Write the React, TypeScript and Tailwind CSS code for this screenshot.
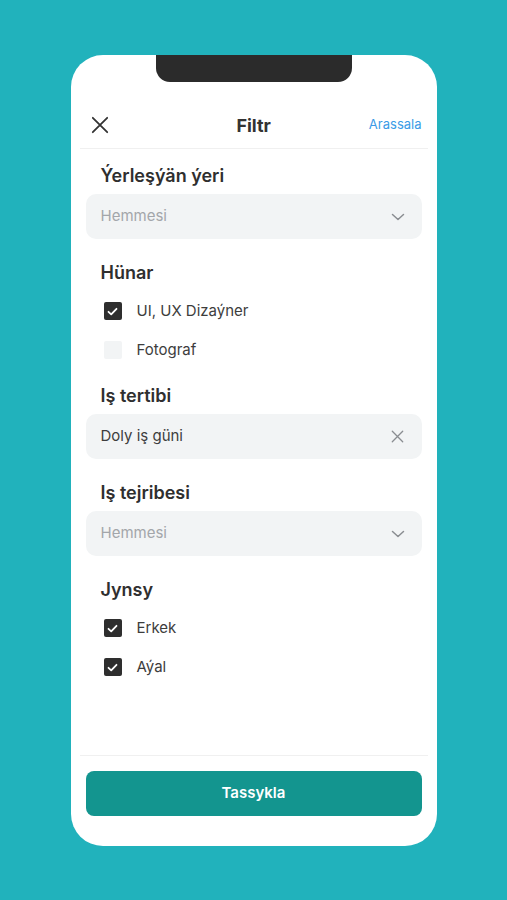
import React from 'react'

function Chevron() {
  return (
    <svg width="16" height="16" viewBox="0 0 16 16" fill="none" stroke="#8a8d91" strokeWidth="1.5" strokeLinecap="round" strokeLinejoin="round">
      <path d="M2.5 5.5l5.5 5 5.5-5" />
    </svg>
  )
}

function Cross({ size, color, width }: { size: number; color: string; width: number }) {
  return (
    <svg width={size} height={size} viewBox="0 0 20 20" fill="none" stroke={color} strokeWidth={width} strokeLinecap="round">
      <path d="M2 2l16 16M18 2L2 18" />
    </svg>
  )
}

function Check({ label, checked }: { label: string; checked: boolean }) {
  return (
    <div className="flex items-center h-6 pl-[3px]">
      {checked ? (
        <div className="w-[18px] h-[18px] rounded-[2px] bg-[#2e2e2e] flex items-center justify-center">
          <svg width="11" height="9" viewBox="0 0 11 9" fill="none" stroke="white" strokeWidth="1.8" strokeLinecap="round" strokeLinejoin="round">
            <path d="M1.5 4.8l2.7 2.5L9.5 1.8" />
          </svg>
        </div>
      ) : (
        <div className="w-[18px] h-[18px] rounded-[2px] bg-[#f2f4f5]" />
      )}
      <span className="ml-[15px] text-[15px] text-[#3d3d3d]">{label}</span>
    </div>
  )
}

function Heading({ children }: { children: React.ReactNode }) {
  return <h2 className="pl-[15px] h-6 leading-6 text-[18px] font-semibold text-[#2f2f2f]">{children}</h2>
}

export default function App() {
  return (
    <main className="min-h-[900px] bg-[#21b2bc] pt-[55px]" style={{ fontFamily: 'Inter, "Noto Sans", sans-serif' }}>
      <div className="mx-auto w-[366px] h-[791px] bg-white rounded-[32px] flex flex-col overflow-hidden">
        {/* notch */}
        <div className="flex justify-center">
          <div className="w-[196px] h-[27px] bg-[#2b2b2b] rounded-b-[14px]" />
        </div>

        {/* header */}
        <div className="mt-5 mx-[9px] h-[47px] border-b border-[#f0f0f0] flex items-center justify-between px-[11px]">
          <Cross size={18} color="#333" width={2} />
          <span className="text-[18px] font-bold text-[#333] pl-[30px]">Filtr</span>
          <span className="text-[13px] text-[#3a9be6] mr-[-5px]">Arassala</span>
        </div>

        {/* filters */}
        <div className="flex-1 px-[15px] pt-[15px] flex flex-col gap-[22px]">
          <section className="flex flex-col gap-[6px]">
            <Heading>Ýerleşýän ýeri</Heading>
            <div className="h-[45px] rounded-[10px] bg-[#f2f4f5] flex items-center justify-between pl-[15px] pr-[16px]">
              <span className="text-[15px] text-[#a3a6aa]">Hemmesi</span>
              <Chevron />
            </div>
          </section>

          <section className="flex flex-col gap-[14px]">
            <Heading>Hünar</Heading>
            <div className="flex flex-col gap-[15px] pl-[15px]">
              <Check label="UI, UX Dizaýner" checked />
              <Check label="Fotograf" checked={false} />
            </div>
          </section>

          <section className="flex flex-col gap-[6px]">
            <Heading>Iş tertibi</Heading>
            <div className="h-[45px] rounded-[10px] bg-[#f2f4f5] flex items-center justify-between pl-[15px] pr-[18px]">
              <span className="text-[15px] text-[#3d3d3d]">Doly iş güni</span>
              <Cross size={13} color="#8a8d91" width={2} />
            </div>
          </section>

          <section className="flex flex-col gap-[6px]">
            <Heading>Iş tejribesi</Heading>
            <div className="h-[45px] rounded-[10px] bg-[#f2f4f5] flex items-center justify-between pl-[15px] pr-[16px]">
              <span className="text-[15px] text-[#a3a6aa]">Hemmesi</span>
              <Chevron />
            </div>
          </section>

          <section className="flex flex-col gap-[14px]">
            <Heading>Jynsy</Heading>
            <div className="flex flex-col gap-[15px] pl-[15px]">
              <Check label="Erkek" checked />
              <Check label="Aýal" checked />
            </div>
          </section>
        </div>

        {/* footer */}
        <div className="mx-[9px] border-t border-[#f0f0f0] pt-[15px] pb-[30px] px-[6px]">
          <button className="w-full h-[45px] rounded-[8px] bg-[#13958f] text-white text-[15px] font-semibold">
            Tassykla
          </button>
        </div>
      </div>
    </main>
  )
}
